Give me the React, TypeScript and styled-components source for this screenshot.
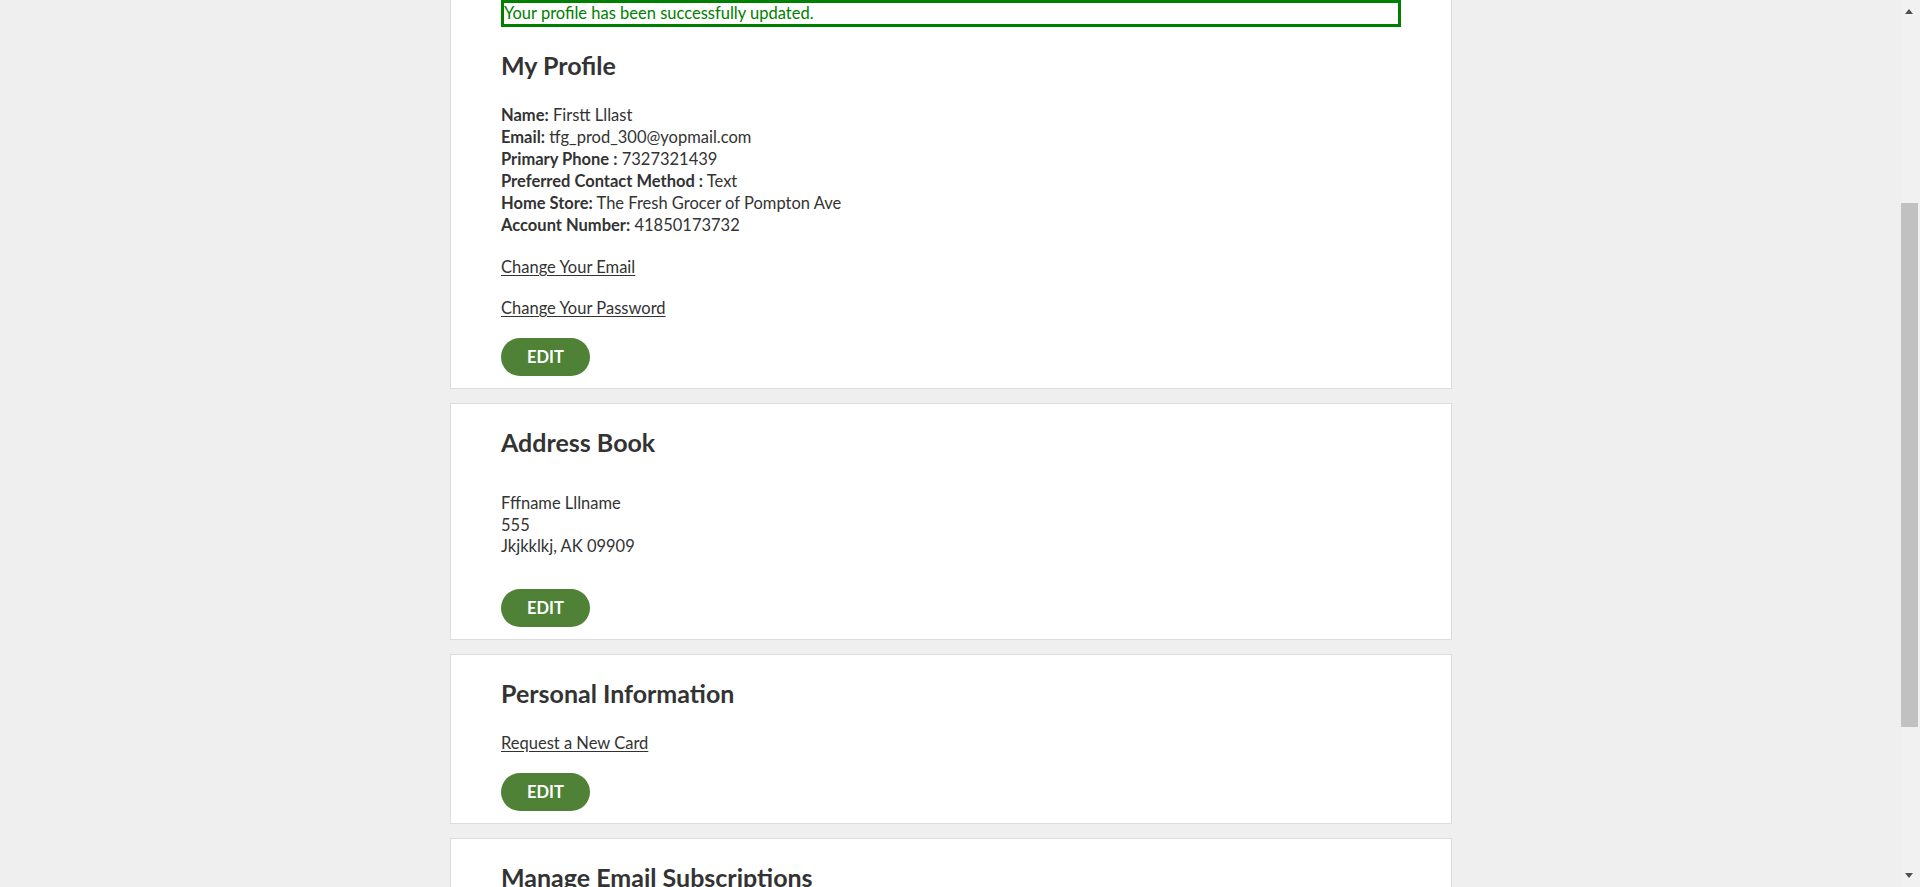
import { useLayoutEffect, useRef } from "react";
import styled, { createGlobalStyle } from "styled-components";

const GlobalStyle = createGlobalStyle`
  html {
    overflow-y: scroll;
  }
  body {
    margin: 0;
    padding-right: 18px;
    background: #efefef;
    font-family: Lato, "Liberation Sans", sans-serif;
    color: #333;
  }
`;

const Page = styled.main`
  width: 1002px;
  margin: 0 auto;
  padding-bottom: 122px;
  display: flex;
  flex-direction: column;
  gap: 14px;
`;

const PageTitle = styled.h1`
  margin: 0 0 -14px;
  padding: 200px 0 40px;
  font-size: 40px;
  line-height: 52px;
  font-weight: 700;
  color: #333;
`;

const Card = styled.section<{ $top?: number }>`
  box-sizing: border-box;
  width: 100%;
  background: #fff;
  border: 1px solid #dcdcdc;
  padding: ${(p) => p.$top ?? 0}px 50px 12px;
`;

const Notice = styled.div`
  box-sizing: border-box;
  width: 100%;
  border: 3px solid #008000;
  color: #008000;
  font-size: 16.5px;
  line-height: 21px;
`;

const Heading = styled.h2`
  margin: 24px 0 24px;
  font-size: 25px;
  line-height: 29px;
  font-weight: 700;
  color: #333;
`;

const InfoList = styled.div`
  margin-bottom: 20px;
  font-size: 16.5px;
  line-height: 22px;
`;

const Label = styled.strong`
  font-weight: 700;
`;

const Address = styled.div`
  padding: 12px 0;
  margin-bottom: 19px;
  font-size: 16.5px;
  line-height: 21.5px;
`;

const LinkLine = styled.p`
  margin: 0 0 19px;
  font-size: 16.5px;
  line-height: 22px;
`;

const TextLink = styled.a`
  color: #333;
  text-decoration: underline;
  text-underline-offset: 2px;
`;

const EditButton = styled.button`
  display: block;
  height: 38px;
  padding: 0 26px;
  border: none;
  border-radius: 19px;
  background: #4f8236;
  color: #fff;
  font-family: Lato, "Liberation Sans", sans-serif;
  font-size: 16.5px;
  font-weight: 700;
  cursor: pointer;
`;

/* the window scrollbar as it shows in the screenshot */
const ScrollTrack = styled.div`
  position: fixed;
  top: 0;
  right: 0;
  width: 19px;
  height: 100vh;
  background: #f1f1f1;
`;

const ScrollThumb = styled.div`
  position: absolute;
  left: 0;
  top: 203px;
  width: 17px;
  height: 524px;
  background: #c1c1c1;
`;

const Arrow = styled.div<{ $down?: boolean }>`
  position: absolute;
  left: 4px;
  ${(p) => (p.$down ? "bottom: 9px;" : "top: 9px;")}
  width: 0;
  height: 0;
  border-left: 4.5px solid transparent;
  border-right: 4.5px solid transparent;
  ${(p) =>
    p.$down ? "border-top: 5px solid #505050;" : "border-bottom: 5px solid #505050;"}
`;

const profile: [string, string][] = [
  ["Name:", "Firstt Lllast"],
  ["Email:", "tfg_prod_300@yopmail.com"],
  ["Primary Phone :", "7327321439"],
  ["Preferred Contact Method :", "Text"],
  ["Home Store:", "The Fresh Grocer of Pompton Ave"],
  ["Account Number:", "41850173732"],
];

export default function App() {
  const noticeRef = useRef<HTMLDivElement>(null);

  useLayoutEffect(() => {
    const el = noticeRef.current;
    if (el) window.scrollTo(0, el.getBoundingClientRect().top + window.scrollY);
  }, []);

  return (
    <>
      <GlobalStyle />
      <Page>
        <PageTitle>My Account</PageTitle>

        <Card $top={20}>
          <Notice ref={noticeRef}>Your profile has been successfully updated.</Notice>
          <Heading>My Profile</Heading>
          <InfoList>
            {profile.map(([label, value]) => (
              <div key={label}>
                <Label>{label}</Label> {value}
              </div>
            ))}
          </InfoList>
          <LinkLine>
            <TextLink href="#">Change Your Email</TextLink>
          </LinkLine>
          <LinkLine>
            <TextLink href="#">Change Your Password</TextLink>
          </LinkLine>
          <EditButton>EDIT</EditButton>
        </Card>

        <Card>
          <Heading>Address Book</Heading>
          <Address>
            <div>Fffname Lllname</div>
            <div>555</div>
            <div>Jkjkklkj, AK 09909</div>
          </Address>
          <EditButton>EDIT</EditButton>
        </Card>

        <Card>
          <Heading>Personal Information</Heading>
          <LinkLine>
            <TextLink href="#">Request a New Card</TextLink>
          </LinkLine>
          <EditButton>EDIT</EditButton>
        </Card>

        <Card>
          <Heading>Manage Email Subscriptions</Heading>
          <LinkLine>
            <TextLink href="#">Update Email Preferences</TextLink>
          </LinkLine>
          <EditButton>EDIT</EditButton>
        </Card>
      </Page>

      <ScrollTrack>
        <Arrow />
        <ScrollThumb />
        <Arrow $down />
      </ScrollTrack>
    </>
  );
}
